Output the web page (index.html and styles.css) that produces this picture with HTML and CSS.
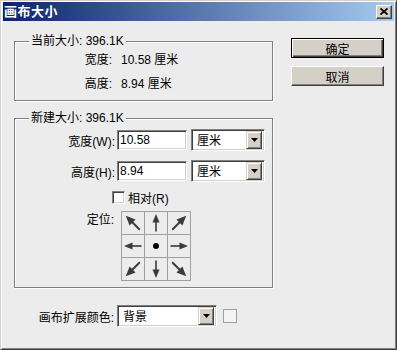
FILE: index.html
```html
<!DOCTYPE html>
<html lang="zh-CN">

<head>
    <meta charset="UTF-8">
    <title>画布大小</title>
    <link rel="stylesheet" href="styles.css">
</head>

<body>
    <div class="window">
        <div class="titlebar">
            <span class="title">画布大小</span>
            <span class="close-btn">
                <svg width="8" height="7" viewBox="0 0 8 7">
                    <path d="M0.5 0.5 L7.5 6.5 M7.5 0.5 L0.5 6.5" stroke="#000" stroke-width="1.8" fill="none"/>
                </svg>
            </span>
        </div>

        <div class="client">
            <div class="main">
                <div class="group group-current">
                    <div class="group-title">当前大小: 396.1K</div>
                    <div class="info-row">
                        <span class="info-label">宽度:</span>
                        <span class="info-value">10.58 厘米</span>
                    </div>
                    <div class="info-row">
                        <span class="info-label">高度:</span>
                        <span class="info-value">8.94 厘米</span>
                    </div>
                </div>

                <div class="group group-new">
                    <div class="group-title">新建大小: 396.1K</div>

                    <div class="field-row">
                        <label class="field-label" for="newWidth">宽度(W):</label>
                        <input class="text-box" type="text" id="newWidth" value="10.58">
                        <div class="combo">
                            <span class="combo-text">厘米</span>
                            <span class="combo-btn"><svg width="7" height="4"><path d="M0 0h7L3.5 4z"/></svg></span>
                        </div>
                    </div>

                    <div class="field-row row-gap">
                        <label class="field-label" for="newHeight">高度(H):</label>
                        <input class="text-box" type="text" id="newHeight" value="8.94">
                        <div class="combo">
                            <span class="combo-text">厘米</span>
                            <span class="combo-btn"><svg width="7" height="4"><path d="M0 0h7L3.5 4z"/></svg></span>
                        </div>
                    </div>

                    <div class="check-row">
                        <span class="check-box"></span>
                        <span>相对(R)</span>
                    </div>

                    <div class="anchor-row">
                        <span class="field-label anchor-label">定位:</span>
                        <div class="anchor-grid">
                            <span class="cell"><svg viewBox="0 0 22 22"><g transform="translate(11 11) rotate(-45) scale(1.2) translate(-11 -11)"><path d="M11 9v10" class="shaft"/><path d="M11 2.5l-3.5 8h7z"/></g></svg></span>
                            <span class="cell"><svg viewBox="0 0 22 22"><path d="M11 9v10.5" class="shaft"/><path d="M11 2l-3.5 8.5h7z"/></svg></span>
                            <span class="cell"><svg viewBox="0 0 22 22"><g transform="translate(11 11) rotate(45) scale(1.2) translate(-11 -11)"><path d="M11 9v10" class="shaft"/><path d="M11 2.5l-3.5 8h7z"/></g></svg></span>
                            <span class="cell"><svg viewBox="0 0 22 22"><g transform="rotate(-90 11 11)"><path d="M11 9v10.5" class="shaft"/><path d="M11 2l-3.5 8.5h7z"/></g></svg></span>
                            <span class="cell"><svg viewBox="0 0 22 22"><circle cx="11" cy="11" r="3" fill="#000"/></svg></span>
                            <span class="cell"><svg viewBox="0 0 22 22"><g transform="rotate(90 11 11)"><path d="M11 9v10.5" class="shaft"/><path d="M11 2l-3.5 8.5h7z"/></g></svg></span>
                            <span class="cell"><svg viewBox="0 0 22 22"><g transform="translate(11 11) rotate(-135) scale(1.2) translate(-11 -11)"><path d="M11 9v10" class="shaft"/><path d="M11 2.5l-3.5 8h7z"/></g></svg></span>
                            <span class="cell"><svg viewBox="0 0 22 22"><g transform="rotate(180 11 11)"><path d="M11 9v10.5" class="shaft"/><path d="M11 2l-3.5 8.5h7z"/></g></svg></span>
                            <span class="cell"><svg viewBox="0 0 22 22"><g transform="translate(11 11) rotate(135) scale(1.2) translate(-11 -11)"><path d="M11 9v10" class="shaft"/><path d="M11 2.5l-3.5 8h7z"/></g></svg></span>
                        </div>
                    </div>
                </div>

                <div class="ext-row">
                    <span class="ext-label">画布扩展颜色:</span>
                    <div class="combo combo-wide">
                        <span class="combo-text">背景</span>
                        <span class="combo-btn"><svg width="7" height="4"><path d="M0 0h7L3.5 4z"/></svg></span>
                    </div>
                    <span class="swatch"></span>
                </div>
            </div>

            <div class="actions">
                <button class="btn btn-default">确定</button>
                <button class="btn">取消</button>
            </div>
        </div>
    </div>
</body>

</html>
```

FILE: styles.css
```css
body {
    margin: 0;
    font-family: "Liberation Sans", "Noto Sans CJK SC", sans-serif;
    font-size: 12px;
    color: #000;
    background-color: #ececec;
}

.window {
    width: 397px;
    height: 350px;
    box-sizing: border-box;
    padding: 1px 2px 2px 2px;
    border: 1px solid;
    border-color: #d4d0c8 #404040 #404040 #d4d0c8;
    box-shadow: inset 1px 1px 0 #fff, inset -1px -1px 0 #808080;
    background-color: #ececec;
}

.titlebar {
    height: 19px;
    display: flex;
    align-items: center;
    justify-content: space-between;
    padding: 0 2px 0 1px;
    background: linear-gradient(to right, #0a246a, #a6caf0);
}

.title {
    color: white;
    font-size: 13px;
    font-weight: bold;
    letter-spacing: 0.5px;
    line-height: 19px;
}

.close-btn {
    width: 16px;
    height: 14px;
    box-sizing: border-box;
    display: flex;
    align-items: center;
    justify-content: center;
    background-color: #d4d0c8;
    border: 1px solid;
    border-color: #fff #404040 #404040 #fff;
    box-shadow: inset -1px -1px 0 #808080;
}

.client {
    display: flex;
    padding-left: 11px;
}

.main {
    width: 259px;
    padding-top: 20px;
}

.group {
    box-sizing: border-box;
    display: flex;
    flex-direction: column;
    border: 1px solid #808080;
    box-shadow: 1px 1px 0 #fff, inset 1px 1px 0 #fff;
}

.group-title {
    align-self: flex-start;
    margin: -8px 0 0 14px;
    padding: 0 2px;
    line-height: 14px;
    background-color: #ececec;
}

.group-current {
    height: 60px;
}

.info-row {
    display: flex;
    line-height: 24px;
}

.info-row:first-of-type {
    margin-top: 3px;
}

.info-label {
    width: 97px;
    text-align: right;
}

.info-value {
    margin-left: 9px;
}

.group-new {
    height: 170px;
    margin-top: 17px;
}

.field-row {
    display: flex;
    align-items: center;
    height: 22px;
    margin-top: 4px;
}

.field-row.row-gap {
    margin-top: 9px;
}

.field-label {
    width: 100px;
    text-align: right;
}

.text-box {
    width: 70px;
    height: 20px;
    box-sizing: border-box;
    margin: 0 0 0 2px;
    padding: 0 2px;
    font: inherit;
    border: 1px solid;
    border-color: #808080 #fff #fff #808080;
    box-shadow: inset 1px 1px 0 #404040, inset -1px -1px 0 #d4d0c8;
    background-color: white;
    outline: none;
}

.combo {
    width: 74px;
    height: 22px;
    box-sizing: border-box;
    margin-left: 4px;
    padding: 2px;
    display: flex;
    align-items: center;
    border: 1px solid;
    border-color: #808080 #fff #fff #808080;
    box-shadow: inset 1px 1px 0 #404040, inset -1px -1px 0 #d4d0c8;
    background-color: white;
}

.combo-text {
    flex: 1;
    padding-left: 3px;
    margin-top: -1px;
}

.combo-btn {
    width: 16px;
    height: 18px;
    box-sizing: border-box;
    display: flex;
    align-items: center;
    justify-content: center;
    background-color: #d4d0c8;
    border: 1px solid;
    border-color: #d4d0c8 #404040 #404040 #d4d0c8;
    box-shadow: inset 1px 1px 0 #fff, inset -1px -1px 0 #808080;
}

.check-row {
    display: flex;
    align-items: center;
    height: 13px;
    margin-top: 9px;
    padding-left: 97px;
}

.check-box {
    width: 13px;
    height: 13px;
    box-sizing: border-box;
    margin-right: 3px;
    border: 1px solid;
    border-color: #808080 #fff #fff #808080;
    box-shadow: inset 1px 1px 0 #404040, inset -1px -1px 0 #d4d0c8;
    background-color: white;
}

.anchor-row {
    display: flex;
    align-items: flex-start;
    margin-top: 7px;
}

.anchor-label {
    width: 99px;
    line-height: 18px;
}

.anchor-grid {
    margin-left: 7px;
    display: grid;
    grid-template-columns: repeat(3, 22px);
    grid-template-rows: repeat(3, 22px);
    gap: 1px;
    padding: 1px;
    background-color: #a0a0a0;
}

.cell {
    background-color: #ececec;
}

.cell svg {
    display: block;
    width: 22px;
    height: 22px;
    fill: #3a3a3a;
}

.shaft {
    stroke: #3a3a3a;
    stroke-width: 1.6;
}

.ext-row {
    display: flex;
    align-items: center;
    margin-top: 17px;
}

.ext-label {
    width: 100px;
    text-align: right;
}

.combo-wide {
    width: 100px;
    margin-left: 3px;
}

.swatch {
    width: 14px;
    height: 14px;
    box-sizing: border-box;
    margin-left: 6px;
    border: 1px solid #a0a0a0;
    background-color: #f4f4f4;
}

.actions {
    display: flex;
    flex-direction: column;
    gap: 8px;
    margin-left: 18px;
    padding-top: 17px;
}

.btn {
    width: 93px;
    height: 20px;
    box-sizing: border-box;
    padding: 0;
    font: inherit;
    background-color: #d4d0c8;
    border: 1px solid;
    border-color: #fff #404040 #404040 #fff;
    box-shadow: inset -1px -1px 0 #808080;
}

.btn-default {
    border-color: #000;
    box-shadow: inset 1px 1px 0 #fff, inset -1px -1px 0 #404040, inset -2px -2px 0 #808080;
}
```
